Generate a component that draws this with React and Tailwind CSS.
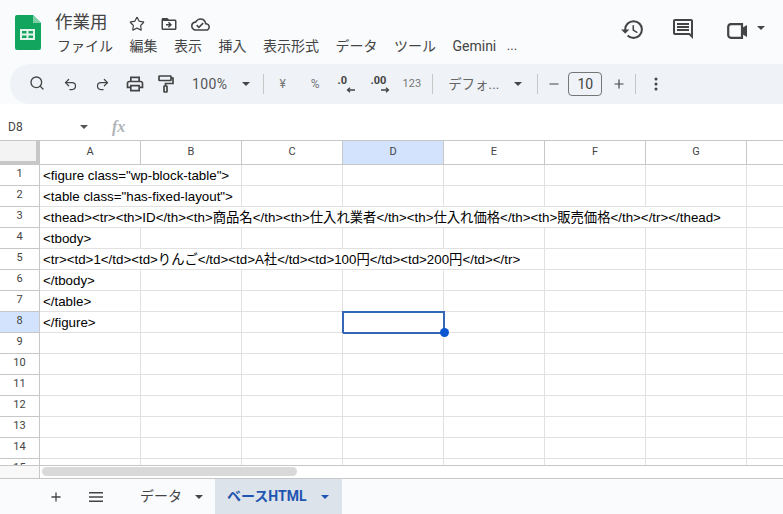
import React from "react";
import { Search, Undo2, Redo2, Star, Minus, Plus } from "lucide-react";

const jp = "font-['Roboto','Noto_Sans_CJK_JP',sans-serif]";
const cols = ["A", "B", "C", "D", "E", "F", "G"];
const menus = ["ファイル", "編集", "表示", "挿入", "表示形式", "データ", "ツール"];

const rows = [
  { text: '<figure class="wp-block-table">', span: 2 },
  { text: '<table class="has-fixed-layout">', span: 2 },
  { text: "<thead><tr><th>ID</th><th>商品名</th><th>仕入れ業者</th><th>仕入れ価格</th><th>販売価格</th></tr></thead>", span: 7 },
  { text: "<tbody>", span: 1 },
  { text: "<tr><td>1</td><td>りんご</td><td>A社</td><td>100円</td><td>200円</td></tr>", span: 5 },
  { text: "</tbody>", span: 1 },
  { text: "</table>", span: 1 },
  { text: "</figure>", span: 1 },
  {}, {}, {}, {}, {}, {}, {},
];

const spanClass = { 1: "col-span-1", 2: "col-span-2", 5: "col-span-5", 7: "col-span-7" };

const Caret = ({ className = "" }) => (
  <svg width="8" height="4" viewBox="0 0 8 4" className={className}><path d="M0 0h8L4 4z" fill="currentColor" /></svg>
);
const Sep = () => <div className="w-px h-[20px] bg-[#c7c7c7]" />;

const Mat = ({ size, d, className = "", children }) => (
  <svg width={size} height={size} viewBox="0 0 24 24" fill="currentColor" className={className}>
    {d && <path d={d} />}
    {children}
  </svg>
);

const Row = ({ n, row }) => {
  const span = row.span || 1;
  const blanks = cols.slice(span);
  return (
    <div className="grid grid-cols-[40px_101px_101px_101px_101px_101px_101px_101px_36px] h-[21px]">
      <div className={`border-r border-b border-[#c7c7c7] text-[11px] flex items-center justify-center pb-[2px] text-[#444] ${n === 8 ? "bg-[#d3e3fd]" : ""}`}>{n}</div>
      <div className={`${spanClass[span]} border-r border-b border-[#e1e1e1] text-[13.33px] leading-[20px] pl-[3px] pt-[1px] text-black whitespace-nowrap overflow-hidden font-['Liberation_Sans','Noto_Sans_CJK_JP',sans-serif]`}>{row.text}</div>
      {blanks.map(c => (
        <div key={c} className={`border-r border-b border-[#e1e1e1] relative ${n === 8 && c === "D" ? "outline-2 -outline-offset-1 outline-[#3367b5]" : ""}`}>
          {n === 8 && c === "D" && <div className="absolute right-[-6px] bottom-[-5px] w-[9px] h-[9px] rounded-full bg-[#0b57d0] z-10" />}
        </div>
      ))}
      <div className="border-b border-[#e1e1e1]" />
    </div>
  );
};

export default function App() {
  return (
    <div className={`w-[783px] h-[514px] overflow-hidden bg-white flex flex-col ${jp}`}>
      <div className="h-[64px] bg-[#f9fbfd] flex shrink-0">
        <div className="w-[55px] pl-[15px] pt-[15px]">
          <svg width="26" height="35" viewBox="0 0 26 35">
            <path d="M2 0h16l8 8v25a2 2 0 0 1-2 2H2a2 2 0 0 1-2-2V2a2 2 0 0 1 2-2z" fill="#11a55d" />
            <path d="M18 0l8 8h-8z" fill="#7fd0a6" />
            <path d="M5 14h15v11H5z" fill="#e6f5ec" />
            <path d="M7 16h4.5v2.5H7zM13.5 16H18v2.5h-4.5zM7 20.5h4.5V23H7zM13.5 20.5H18V23h-4.5z" fill="#11a55d" />
          </svg>
        </div>
        <div className="flex-1 pt-[9px]">
          <div className="flex items-center h-[26px]">
            <span className="text-[17.5px] text-[#444] w-[73px]">作業用</span>
            <Star size={16} strokeWidth={1.8} className="text-[#444] ml-[1px] mt-[4px]" />
            <Mat size={18} className="text-[#444] ml-[15px] mt-[4px]" d="M20 6h-8l-2-2H4c-1.1 0-2 .9-2 2v12c0 1.1.9 2 2 2h16c1.1 0 2-.9 2-2V8c0-1.1-.9-2-2-2zm0 12H4V8h16v10zm-8.01-9l-1.41 1.41L12.16 12H8v2h4.16l-1.59 1.59L11.99 17 16 13.01 11.99 9z" />
            <Mat size={19} className="text-[#444] ml-[13px] mt-[4px]" d="M19.35 10.04A7.49 7.49 0 0 0 12 4C9.11 4 6.6 5.64 5.35 8.04A5.994 5.994 0 0 0 0 14c0 3.31 2.69 6 6 6h13c2.76 0 5-2.24 5-5 0-2.64-2.05-4.78-4.65-4.96zM19 18H6c-2.21 0-4-1.79-4-4 0-2.05 1.53-3.76 3.56-3.97l1.07-.11.5-.95A5.469 5.469 0 0 1 12 6c2.62 0 4.88 1.86 5.39 4.43l.3 1.5 1.53.11A2.98 2.98 0 0 1 22 15c0 1.65-1.35 3-3 3zm-9-3.82l-2.09-2.09L6.5 13.5 10 17l6.01-6.01-1.41-1.41z" />
          </div>
          <div className="flex items-center h-[24px] mt-[-1px] pl-[2px] text-[14px] text-[#444] gap-[16.5px]">
            {menus.map(m => <span key={m} className="whitespace-nowrap">{m}</span>)}
            <span className="whitespace-nowrap text-[14px]">Gemini</span>
            <span className="text-[13px] ml-[-6px]">...</span>
          </div>
        </div>
        <div className="flex items-start pt-[17px] pr-[18px] text-[#444]">
          <Mat size={25} d="M13 3a9 9 0 0 0-9 9H1l3.89 3.89.07.14L9 12H6c0-3.87 3.13-7 7-7s7 3.13 7 7-3.13 7-7 7c-1.93 0-3.68-.79-4.94-2.06l-1.42 1.42A8.954 8.954 0 0 0 13 21a9 9 0 0 0 0-18zm-1 5v5l4.28 2.54.72-1.21-3.5-2.08V8H12z" />
          <Mat size={24} className="ml-[26px]" d="M20 17.17L18.83 16H4V4h16v13.17zM20 2H4c-1.1 0-2 .9-2 2v12c0 1.1.9 2 2 2h14l4 4V4c0-1.1-.9-2-2-2zM6 12h12v2H6zM6 9h12v2H6zM6 6h12v2H6z" />
          <svg width="22" height="16" viewBox="0 0 22 16" className="ml-[32px] mt-[6px]">
            <path d="M4 1.2h11v13.6H4A3 3 0 0 1 1.2 12V4A3 3 0 0 1 4 1.2z" fill="none" stroke="currentColor" strokeWidth="2.2" />
            <path d="M15 5l5-3v12l-5-3z" fill="currentColor" />
          </svg>
          <Caret className="ml-[8px] mt-[9px]" />
        </div>
      </div>

      <div className="h-[40px] shrink-0 bg-[#f9fbfd]">
        <div className="h-[40px] ml-[10px] rounded-l-[20px] bg-[#eff3f8] flex items-center text-[#444]">
          <Search size={16} strokeWidth={2} className="ml-[19px] mt-[-2px]" />
          <Undo2 size={15} strokeWidth={2} className="ml-[18px] mt-[1px]" />
          <Redo2 size={15} strokeWidth={2} className="ml-[17px] mt-[1px]" />
          <Mat size={20} className="ml-[15px]" d="M19 8h-1V3H6v5H5c-1.66 0-3 1.34-3 3v6h4v4h12v-4h4v-6c0-1.66-1.34-3-3-3zM8 5h8v3H8V5zm8 12v2H8v-4h8v2zm2-2v-2H6v2H4v-4c0-.55.45-1 1-1h14c.55 0 1 .45 1 1v4h-2z" />
          <svg width="16" height="18" viewBox="0 0 16 18" fill="none" stroke="currentColor" strokeWidth="1.7" className="ml-[13px]">
            <rect x="1" y="1" width="12" height="4.5" rx=".6" />
            <path d="M13 3h2v5.5H7.5V11" />
            <rect x="6" y="11" width="3" height="6" rx=".5" />
          </svg>
          <span className="text-[14px] tracking-[0.4px] ml-[18px] text-[#555]">100%</span>
          <Caret className="ml-[15px]" />
          <div className="ml-[13px]"><Sep /></div>
          <span className="text-[12px] text-[#777] ml-[15px]">¥</span>
          <span className="text-[12px] text-[#777] ml-[25px]">%</span>
          <div className="ml-[18px] w-[17px] h-[20px] relative">
            <span className="absolute left-0 top-[1px] text-[11px] font-bold leading-none">.0</span>
            <svg width="9" height="6" viewBox="0 0 9 6" className="absolute right-0 bottom-[1px]"><path d="M9 3H2M4 .7L1.5 3 4 5.3" fill="none" stroke="currentColor" strokeWidth="1.3" /></svg>
          </div>
          <div className="ml-[16px] w-[19px] h-[20px] relative">
            <span className="absolute left-0 top-[1px] text-[11px] font-bold leading-none">.00</span>
            <svg width="9" height="6" viewBox="0 0 9 6" className="absolute right-0 bottom-[1px]"><path d="M0 3h7M5 .7L7.5 3 5 5.3" fill="none" stroke="currentColor" strokeWidth="1.3" /></svg>
          </div>
          <span className="text-[11px] text-[#777] ml-[13px]">123</span>
          <div className="ml-[11px]"><Sep /></div>
          <span className="text-[13.5px] text-[#666] ml-[15px]">デフォ...</span>
          <Caret className="ml-[15px]" />
          <div className="ml-[15px]"><Sep /></div>
          <Minus size={14} strokeWidth={2} className="ml-[9px]" />
          <div className="ml-[7px] w-[34px] h-[24px] border border-[#747775] rounded-[4px] flex items-center justify-center text-[14px]">10</div>
          <Plus size={14} strokeWidth={2} className="ml-[10px]" />
          <div className="ml-[9px]"><Sep /></div>
          <svg width="4" height="14" viewBox="0 0 4 14" fill="currentColor" className="ml-[18px]"><circle cx="2" cy="2" r="1.5" /><circle cx="2" cy="7" r="1.5" /><circle cx="2" cy="12" r="1.5" /></svg>
        </div>
      </div>

      <div className="h-[37px] shrink-0 bg-white flex items-center border-b border-[#c7c7c7] pt-[10px]">
        <span className="text-[12px] text-[#444] ml-[8px] w-[72px]">D8</span>
        <Caret className="text-[#555]" />
        <span className="ml-[24px] text-[16px] italic font-bold text-[#b0b4b8] font-['Liberation_Serif',serif]">fx</span>
      </div>

      <div className="flex-1 min-h-0 overflow-hidden">
        <div className="grid grid-cols-[40px_101px_101px_101px_101px_101px_101px_101px_36px] h-[24px]">
          <div className="bg-[#f3f3f3] border-r-[4px] border-b-[4px] border-[#c7c7c7]" />
          {cols.map(c => (
            <div key={c} className={`border-r border-b border-[#c7c7c7] text-[11px] flex items-center justify-center text-[#444] ${c === "D" ? "bg-[#d3e3fd]" : ""}`}>{c}</div>
          ))}
          <div className="border-b border-[#c7c7c7]" />
        </div>
        {rows.map((r, i) => <Row key={i} n={i + 1} row={r} />)}
      </div>

      <div className="h-[14px] shrink-0 border-t border-b border-[#c7c7c7] bg-white flex">
        <div className="w-[40px] border-r border-[#c7c7c7] bg-[#f8f8f8]" />
        <div className="w-[255px] h-[9px] ml-[2px] mt-[1px] rounded-full bg-[#d9d9d9]" />
      </div>

      <div className="h-[35px] shrink-0 bg-[#f9fbfd] flex items-stretch text-[#444]">
        <div className="flex items-center">
          <Plus size={14} strokeWidth={2.2} className="ml-[49px]" />
          <svg width="14" height="10" viewBox="0 0 14 10" fill="currentColor" className="ml-[26px]"><path d="M0 0h14v1.6H0zM0 4.2h14v1.6H0zM0 8.4h14V10H0z" /></svg>
          <span className="text-[14px] ml-[37px]">データ</span>
          <Caret className="ml-[13px] mt-[1px]" />
        </div>
        <div className="ml-[12px] w-[127px] bg-[#dde3ea] flex items-center pl-[12px] text-[#1f55b0]">
          <span className="text-[14px] font-bold">ベースHTML</span>
          <Caret className="ml-[14px] mt-[1px]" />
        </div>
      </div>
    </div>
  );
}
